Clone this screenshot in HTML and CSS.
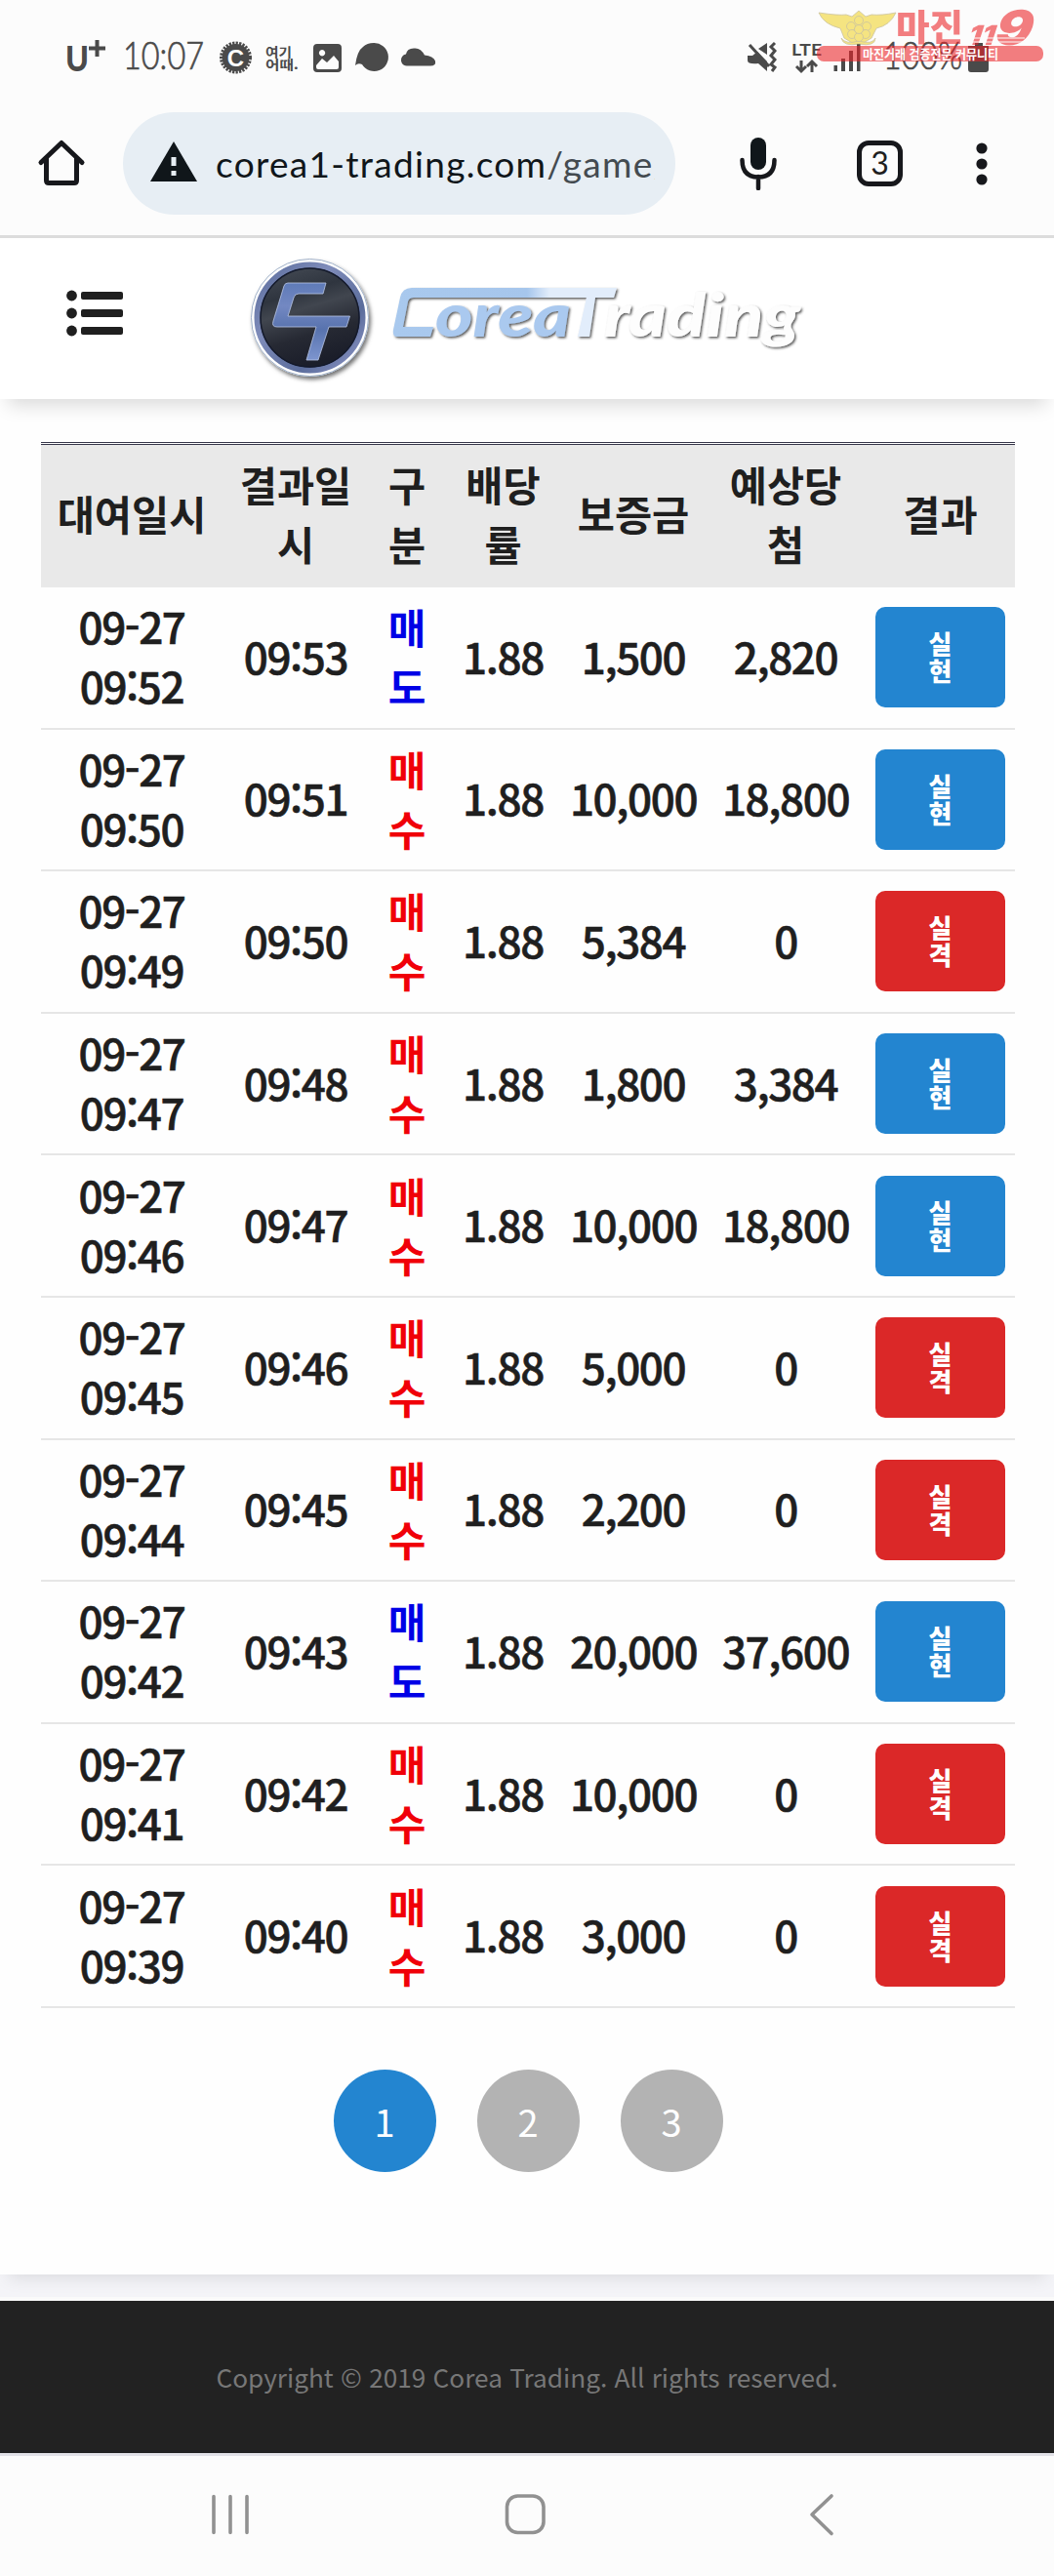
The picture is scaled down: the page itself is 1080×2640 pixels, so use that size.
FILE: index.html
```html
<!DOCTYPE html>
<html lang="ko">
<head>
<meta charset="utf-8">
<title>Corea Trading</title>
<link rel="stylesheet" href="styles.css">
</head>
<body>
<div class="screen">
  <div class="status">
    <svg class="status-icons" width="1080" height="100" viewBox="0 0 1080 100">
      <g fill="#4a4a4a">
        <text class="carrier" x="67" y="73" textLength="24" lengthAdjust="spacingAndGlyphs">U</text>
        <path d="M91 49.5H108M99.5 41V58" stroke="#4a4a4a" stroke-width="4"/>
        <text class="clock" x="126" y="71" textLength="83" lengthAdjust="spacingAndGlyphs">10:07</text>
        <circle cx="241.500" cy="59" r="14"/>
        <circle cx="241.500" cy="59" r="14.500" fill="none" stroke="#4a4a4a" stroke-width="4" stroke-dasharray="2.200 1.200"/>
        <text class="coin" x="241.500" y="67.500" text-anchor="middle">C</text>
        <text class="tiny" x="272" y="58" textLength="27" lengthAdjust="spacingAndGlyphs">여기</text>
        <text class="tiny" x="272" y="71" textLength="34" lengthAdjust="spacingAndGlyphs">어때.</text>
        <path fill-rule="evenodd" d="M325 45h21a4 4 0 0 1 4 4v21a4 4 0 0 1-4 4h-21a4 4 0 0 1-4-4V49a4 4 0 0 1 4-4ZM324 67v2a2 2 0 0 0 2 2h19a2 2 0 0 0 2-2v-6l-5-6-7 7-5-4ZM330 51a3.200 3.200 0 1 0 .1 0Z"/>
        <path d="M383 44a14.500 14.500 0 1 1-12 22q-4-2-7 1q2-15 8-19q4-4 11-4Z"/>
        <path d="M418 67.500a6 6 0 0 1-2-12q1-6 8-6q7-1 11 7q9 1 11 6q1 5-5 5Z"/>
        <path d="M786 44v12l-9-6ZM766 57h5l5-4L786 63v10l-9-8q-11 1-11-3Z"/>
        <path d="M768 46L788 68M794 44l-4 4 4 4-4 5 4 4-4 5 4 3-3 4" fill="none" stroke="#4a4a4a" stroke-width="3"/>
        <text class="lte" x="811" y="57" textLength="31" lengthAdjust="spacingAndGlyphs">LTE</text>
        <path d="M821 62v11M816 68l5 5 5-5M832 74V63M827 68l5-5 5 5" fill="none" stroke="#4a4a4a" stroke-width="3"/>
        <path d="M854.500 67h3.500v6h-3.500ZM862 60h4v13h-4ZM870 52h4v21h-4ZM878 45h3.500v28h-3.500Z"/>
        <text class="clock" x="905" y="71" textLength="81" lengthAdjust="spacingAndGlyphs">100%</text>
        <path d="M999 44h8v3h6v24a3 3 0 0 1-3 3h-15a3 3 0 0 1-3-3V47h7Z"/>
      </g>
      <g opacity=".58">
        <rect x="837" y="47" width="232" height="16" rx="7" fill="#ec2226"/>
        <g fill="#f0d32a" stroke="#a89a60" stroke-width=".8">
          <path d="M839 13q20 3 28 2l6 2 7-6 7 6 6-2q10 1 25-2q-6 13-20 16l-5 10-10 6h-8l-10-6-4-10q-17-4-22-16Z"/>
          <path d="M862 39q5 7 18 3q14 4 17-3q0 9-17 6q-16 3-18-6Z"/>
          <circle cx="872" cy="27" r="4.500"/><circle cx="888" cy="27" r="4.500"/><circle cx="873" cy="35" r="4.500"/><circle cx="887" cy="35" r="4.500"/><circle cx="880" cy="38" r="4.500"/><circle cx="880" cy="21" r="4.500"/><circle cx="880" cy="30" r="4.500"/>
        </g>
        <text class="brand" x="918" y="42" fill="#ec2226" textLength="69" lengthAdjust="spacingAndGlyphs">마진</text>
        <text class="ones" transform="translate(990 46) skewX(-18)" fill="#ec2226" textLength="27" lengthAdjust="spacingAndGlyphs">11</text>
        <text class="nine" transform="translate(1016 46) skewX(-18)" fill="#ec2226" textLength="38" lengthAdjust="spacingAndGlyphs">9</text>
      </g>
      <path d="M990 39h60M988 43h62" stroke="#fcfcfc" stroke-width="1"/>
      <text class="slogan" x="884" y="60" fill="#fff" textLength="139" lengthAdjust="spacingAndGlyphs">마진거래 검증전문 커뮤니티</text>
    </svg>
  </div>

  <div class="browser">
    <svg class="home" width="50" height="50" viewBox="0 0 50 50" fill="none" stroke="#17181c" stroke-width="5" stroke-linejoin="round" stroke-linecap="round"><path d="M4 24.500 25 4.500 46 24.500M9.500 20.500V43q0 2.500 2.500 2.500h26q2.500 0 2.500-2.500V20.500"/></svg>
    <div class="address">
      <svg width="48" height="41" viewBox="0 0 48 41"><path d="M24 0 48 41H0Z" fill="#10161a"/><path d="M21.500 16h5v9h-5ZM21.500 30h5v5h-5Z" fill="#e7eef4"/></svg>
      <div class="url"><span>corea1-trading.com</span><span class="path">/game/</span></div>
    </div>
    <svg class="mic" width="38" height="54" viewBox="0 0 38 54"><rect x="11" y="0" width="16" height="33" rx="8" fill="#10161a"/><path d="M2.500 23q0 17.500 16.500 17.500T35.500 23M19 40v12" fill="none" stroke="#17181c" stroke-width="4.500" stroke-linecap="round"/></svg>
    <div class="tabs">3</div>
    <svg class="dots" width="12" height="44" viewBox="0 0 12 44" fill="#17181c"><circle cx="6" cy="6" r="5.600"/><circle cx="6" cy="22" r="5.600"/><circle cx="6" cy="38" r="5.600"/></svg>
  </div>

  <header class="site-header">
    <svg class="header-art" width="1080" height="165" viewBox="0 244 1080 165">
      <defs>
        <linearGradient id="face" x1="0" y1="0" x2="0.300" y2="1"><stop offset="0" stop-color="#4a505a"/><stop offset=".35" stop-color="#2f353f"/><stop offset=".5" stop-color="#41464f"/><stop offset=".75" stop-color="#262933"/><stop offset="1" stop-color="#1b1e2a"/></linearGradient>
        <linearGradient id="ring" x1="0" y1="0" x2="1" y2="1"><stop offset="0" stop-color="#5a6c9c"/><stop offset=".35" stop-color="#7f8cba"/><stop offset=".7" stop-color="#5b6d9c"/><stop offset="1" stop-color="#8f97c8"/></linearGradient>
        <linearGradient id="mark" x1="0" y1="0" x2="0" y2="1"><stop offset="0" stop-color="#5f7bb8"/><stop offset=".3" stop-color="#7388c2"/><stop offset=".6" stop-color="#5873ae"/><stop offset="1" stop-color="#7d95cf"/></linearGradient>
        <linearGradient id="bar" gradientUnits="userSpaceOnUse" x1="402" y1="0" x2="632" y2="0"><stop offset="0" stop-color="#a9c9ee"/><stop offset=".6" stop-color="#a6c6ec"/><stop offset=".7" stop-color="#e2edfb"/><stop offset="1" stop-color="#e2edfb"/></linearGradient>
        <filter id="drop" x="-20%" y="-20%" width="150%" height="150%"><feDropShadow dx="2" dy="3" stdDeviation="2" flood-opacity=".55"/></filter>
        <filter id="edge" x="-5%" y="-10%" width="110%" height="130%"><feDropShadow dx="1.500" dy="1.500" stdDeviation=".8" flood-color="#333" flood-opacity=".8"/></filter>
      </defs>
      <g fill="#1f1f1f"><circle cx="73.500" cy="303" r="5.400"/><circle cx="73.500" cy="321" r="5.400"/><circle cx="73.500" cy="339" r="5.400"/>
      <rect x="83" y="299" width="43" height="8" rx="2"/><rect x="83" y="317" width="43" height="8" rx="2"/><rect x="83" y="335" width="43" height="8" rx="2"/></g>
      <circle cx="317.500" cy="325.500" r="60" fill="#fff" stroke="#9fb0c8" stroke-width="1" filter="url(#drop)"/>
      <circle cx="317.500" cy="325.500" r="54" fill="url(#face)" stroke="url(#ring)" stroke-width="6"/>
      <circle cx="317.500" cy="325.500" r="50.500" fill="none" stroke="#141a2c" stroke-width="1.500"/>
      <path d="M334 290H295q-3 0-4 3L280 329q-2 6 4 6h40L314 369h12l11-34h18l3.500-11H295L301 305q1-4 5-4h25Z" fill="url(#mark)" stroke="#b9c6e6" stroke-width=".8"/>
      <g filter="url(#edge)">
        <path d="M632 295 629 305H610L604 345H592L601 305H424q-5 0-6 4l-5 26h31l-3 10H407q-5 0-4-7l7-33q2-10 12-10Z" fill="url(#bar)"/>
        <text class="word" x="446" y="345" fill="#aac9ef" textLength="139" lengthAdjust="spacingAndGlyphs">orea</text>
        <text class="word" x="619" y="345" fill="#fdfdfd" textLength="201" lengthAdjust="spacingAndGlyphs">rading</text>
      </g>
    </svg>
  </header>

  <main>
    <table>
      <colgroup><col class="c1"><col class="c2"><col class="c3"><col class="c4"><col class="c5"><col class="c6"><col class="c7"></colgroup>
      <thead><tr><th>대여일시</th><th>결과일<br>시</th><th>구<br>분</th><th>배당<br>률</th><th>보증금</th><th>예상당<br>첨</th><th>결과</th></tr></thead>
      <tbody>
        <tr><td>09-27<br>09:52</td><td>09:53</td><td class="sell">매<br>도</td><td>1.88</td><td>1,500</td><td>2,820</td><td><span class="btn win">실<br>현</span></td></tr>
        <tr><td>09-27<br>09:50</td><td>09:51</td><td class="buy">매<br>수</td><td>1.88</td><td>10,000</td><td>18,800</td><td><span class="btn win">실<br>현</span></td></tr>
        <tr><td>09-27<br>09:49</td><td>09:50</td><td class="buy">매<br>수</td><td>1.88</td><td>5,384</td><td>0</td><td><span class="btn lose">실<br>격</span></td></tr>
        <tr><td>09-27<br>09:47</td><td>09:48</td><td class="buy">매<br>수</td><td>1.88</td><td>1,800</td><td>3,384</td><td><span class="btn win">실<br>현</span></td></tr>
        <tr><td>09-27<br>09:46</td><td>09:47</td><td class="buy">매<br>수</td><td>1.88</td><td>10,000</td><td>18,800</td><td><span class="btn win">실<br>현</span></td></tr>
        <tr><td>09-27<br>09:45</td><td>09:46</td><td class="buy">매<br>수</td><td>1.88</td><td>5,000</td><td>0</td><td><span class="btn lose">실<br>격</span></td></tr>
        <tr><td>09-27<br>09:44</td><td>09:45</td><td class="buy">매<br>수</td><td>1.88</td><td>2,200</td><td>0</td><td><span class="btn lose">실<br>격</span></td></tr>
        <tr><td>09-27<br>09:42</td><td>09:43</td><td class="sell">매<br>도</td><td>1.88</td><td>20,000</td><td>37,600</td><td><span class="btn win">실<br>현</span></td></tr>
        <tr><td>09-27<br>09:41</td><td>09:42</td><td class="buy">매<br>수</td><td>1.88</td><td>10,000</td><td>0</td><td><span class="btn lose">실<br>격</span></td></tr>
        <tr><td>09-27<br>09:39</td><td>09:40</td><td class="buy">매<br>수</td><td>1.88</td><td>3,000</td><td>0</td><td><span class="btn lose">실<br>격</span></td></tr>
      </tbody>
    </table>
    <nav class="pages"><a class="page current">1</a><a class="page">2</a><a class="page">3</a></nav>
  </main>

  <div class="gap"></div>
  <footer>Copyright © 2019 Corea Trading. All rights reserved.</footer>
  <div class="navbar">
    <svg width="1080" height="123" viewBox="0 2517 1080 123" fill="none" stroke="#919191" stroke-width="3.600" stroke-linecap="round" stroke-linejoin="round">
      <path d="M219 2558.500V2595.500M236 2558.500V2595.500M253 2558.500V2595.500"/>
      <rect x="519.500" y="2558" width="37.500" height="37.500" rx="11"/>
      <path d="M852 2558 832 2577 852 2596.500"/>
    </svg>
  </div>
</div>
</body>
</html>
```

FILE: styles.css
```css
* { box-sizing: border-box; }
body {
  margin: 0;
  background: #fcfcfc;
  font-family: "Noto Sans CJK KR", "Noto Sans", sans-serif;
  color: #1f1f1f;
}
.screen { width: 1080px; height: 2640px; overflow: hidden; display: flex; flex-direction: column; }
svg { display: block; flex: none; }

/* status bar */
.status { height: 100px; }
.carrier { font: 900 36px Lato, sans-serif; }
.clock { font: 300 39px Lato, sans-serif; stroke: #4a4a4a; stroke-width: 0.7px; }
.coin { font: 700 24px "Liberation Sans", sans-serif; fill: #fcfcfc; }
.tiny { font: 700 13px "Noto Sans CJK KR", sans-serif; }
.lte { font: 700 17px Lato, sans-serif; }
.brand { font: 900 37px "Noto Sans CJK KR", sans-serif; }
.ones { font: 900 28px Inter, sans-serif; }
.nine { font: 900 49px Inter, sans-serif; }
.slogan { font: 700 13px "Noto Sans CJK KR", sans-serif; }
.word { font: italic 900 61px Lato, sans-serif; }

/* browser toolbar */
.browser {
  height: 144px;
  padding: 15px 0 0 38px;
  display: flex;
  align-items: flex-start;
  border-bottom: 3px solid #dcdcdc;
}
.home { margin-top: 27px; }
.address {
  width: 566px;
  height: 105px;
  margin-left: 38px;
  padding-left: 28px;
  border-radius: 53px;
  background: #e7eef4;
  display: flex;
  align-items: center;
}
.address svg { margin-bottom: 5px; }
.url {
  width: 450px;
  margin-left: 19px;
  overflow: hidden;
  white-space: nowrap;
  font: 400 37px/52px Lato, sans-serif;
  letter-spacing: 1.3px;
  color: #10161a;
}
.url .path { color: #444b50; }
.mic { margin: 26px 0 0 66px; }
.tabs {
  width: 47px;
  height: 47px;
  margin: 29px 0 0 82px;
  border: 5px solid #17181c;
  border-radius: 12px;
  font: 400 32px/35px Lato, sans-serif;
  text-align: center;
}
.dots { margin: 31px 0 0 75px; }

/* site header */
.site-header {
  height: 165px;
  background: #fff;
  flex: none;
  position: relative;
  z-index: 2;
  box-shadow: 0 14px 18px -8px rgba(0, 0, 0, 0.15);
}

/* result table */
main {
  height: 1922px;
  padding: 44px 40px 0 42px;
  background: #fefefe;
  flex: none;
  position: relative;
  z-index: 1;
  box-shadow: 0 12px 16px -8px rgba(0, 0, 0, 0.1);
}
table {
  width: 998px;
  table-layout: fixed;
  border-collapse: separate;
  border-spacing: 0;
  border-top: 3px double #36364a;
  text-align: center;
  font-weight: 500;
}
.c1 { width: 186px; }
.c2 { width: 150px; }
.c3 { width: 78px; }
.c4 { width: 119px; }
.c5 { width: 148px; }
.c6 { width: 164px; }
.c7 { width: 153px; }
th {
  height: 146px;
  padding: 0 0 5px;
  background: #e9e9e9;
  font-size: 41.5px;
  line-height: 61px;
  font-weight: 700;
}
td {
  height: 145.6px;
  padding: 0 0 3px;
  border-bottom: 2.6px solid #e6e6e6;
  font-size: 44px;
  line-height: 61px;
  letter-spacing: -1.4px;
  white-space: nowrap;
  -webkit-text-stroke: 0.6px currentColor;
}
td:last-child { padding: 0; -webkit-text-stroke: 0; letter-spacing: 0; }
.sell, .buy { font-size: 42px; font-weight: 700; -webkit-text-stroke: 0; letter-spacing: 0; }
.sell { color: #0000e6; }
.buy { color: #f00008; }
.btn {
  display: flex;
  align-items: center;
  justify-content: center;
  width: 133px;
  height: 103px;
  margin: 0 auto;
  padding-bottom: 1px;
  border-radius: 10px;
  color: #fff;
  font-size: 26px;
  line-height: 28px;
  font-weight: 900;
}
.win { background: #2385d0; }
.lose { background: #db2828; }

/* pagination */
.pages { display: flex; gap: 42px; justify-content: center; margin-top: 63px; }
.page {
  width: 105px;
  height: 105px;
  border-radius: 50%;
  background: #b3b3b3;
  color: #fff;
  font-size: 38px;
  line-height: 105px;
  text-align: center;
}
.current { background: #2385d0; }

/* footer */
.gap { height: 27px; flex: none; background: #f4f4f8; border-bottom: 4px solid #fafafa; }
footer {
  height: 156px;
  flex: none;
  background: #222;
  color: #777;
  text-align: center;
  font-size: 26.2px;
  line-height: 156px;
}
.navbar { height: 126px; flex: none; border-top: 3px solid #e2e2e8; background: #fcfcfc; }
```
